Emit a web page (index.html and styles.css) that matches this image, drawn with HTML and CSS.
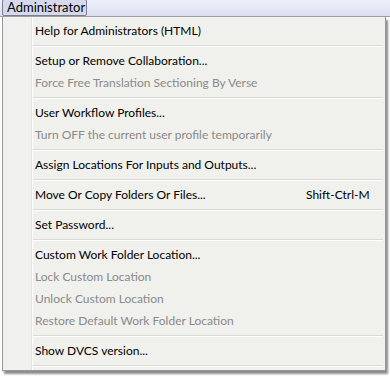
FILE: index.html
```
<html>
<head>
<meta charset="utf-8">
<title>Administrator menu</title>
<link rel="stylesheet" href="styles.css">
</head>
<body>
<div class='menubar'>
  <span class='menu-title'>Administrator</span>
</div>
<div class='dropdown'>
  <div class='item'>Help for Administrators (HTML)</div>
  <div class='sep'></div>
  <div class='item'>Setup or Remove Collaboration...</div>
  <div class='item disabled'>Force Free Translation Sectioning By Verse</div>
  <div class='sep'></div>
  <div class='item'>User Workflow Profiles...</div>
  <div class='item disabled'>Turn OFF the current user profile temporarily</div>
  <div class='sep'></div>
  <div class='item'>Assign Locations For Inputs and Outputs...</div>
  <div class='sep'></div>
  <div class='item'><span>Move Or Copy Folders Or Files...</span><span class='shortcut'>Shift-Ctrl-M</span></div>
  <div class='sep'></div>
  <div class='item'>Set Password...</div>
  <div class='sep'></div>
  <div class='item'>Custom Work Folder Location...</div>
  <div class='item disabled'>Lock Custom Location</div>
  <div class='item disabled'>Unlock Custom Location</div>
  <div class='item disabled'>Restore Default Work Folder Location</div>
  <div class='sep'></div>
  <div class='item'>Show DVCS version...</div>
  <div class='sep'></div>
</div>
</body>
</html>
```
FILE: styles.css
```
html {
  background: #fff;
}
body {
  margin: 0;
  font-family: Lato, "Liberation Sans", Arial, sans-serif;
  font-size: 12px;
  color: #000;
}
.menubar {
  height: 16px;
  background: linear-gradient(#eef0f8, #dcdff1);
  border-bottom: 1px solid #9d9da5;
  display: flex;
  align-items: flex-end;
}
.menu-title {
  margin-left: 2px;
  box-sizing: border-box;
  width: 85px;
  height: 17px;
  line-height: 15px;
  padding-left: 4px;
  font-size: 13px;
  border: 1px solid #7d7f8c;
  border-radius: 2px;
  background: #d6d9ec;
}
.dropdown {
  margin-left: 2px;
  width: 384px;
  box-sizing: border-box;
  padding: 3px 0 0 0;
  border: 1px solid #979797;
  border-top: none;
  background: linear-gradient(to right, #f0f0ee 28px, #e2e3e3 28px, #e2e3e3 29px, #fff 29px, #fff 30px, #f0f0ec 30px);
  box-shadow: 2px 3px 2px rgba(0, 0, 0, 0.45);
}
.item {
  height: 22px;
  line-height: 22px;
  padding-left: 32px;
  padding-right: 15px;
  display: flex;
  justify-content: space-between;
  white-space: nowrap;
}
.disabled {
  color: #8a8a8a;
}
.shortcut {
  width: 64px;
}
.sep {
  height: 8px;
  margin-left: 30px;
  margin-right: 2px;
  box-sizing: border-box;
  padding-top: 3px;
}
.sep::before {
  content: '';
  display: block;
  border-top: 1px solid #d9d9d6;
  border-bottom: 1px solid #fff;
}
```
